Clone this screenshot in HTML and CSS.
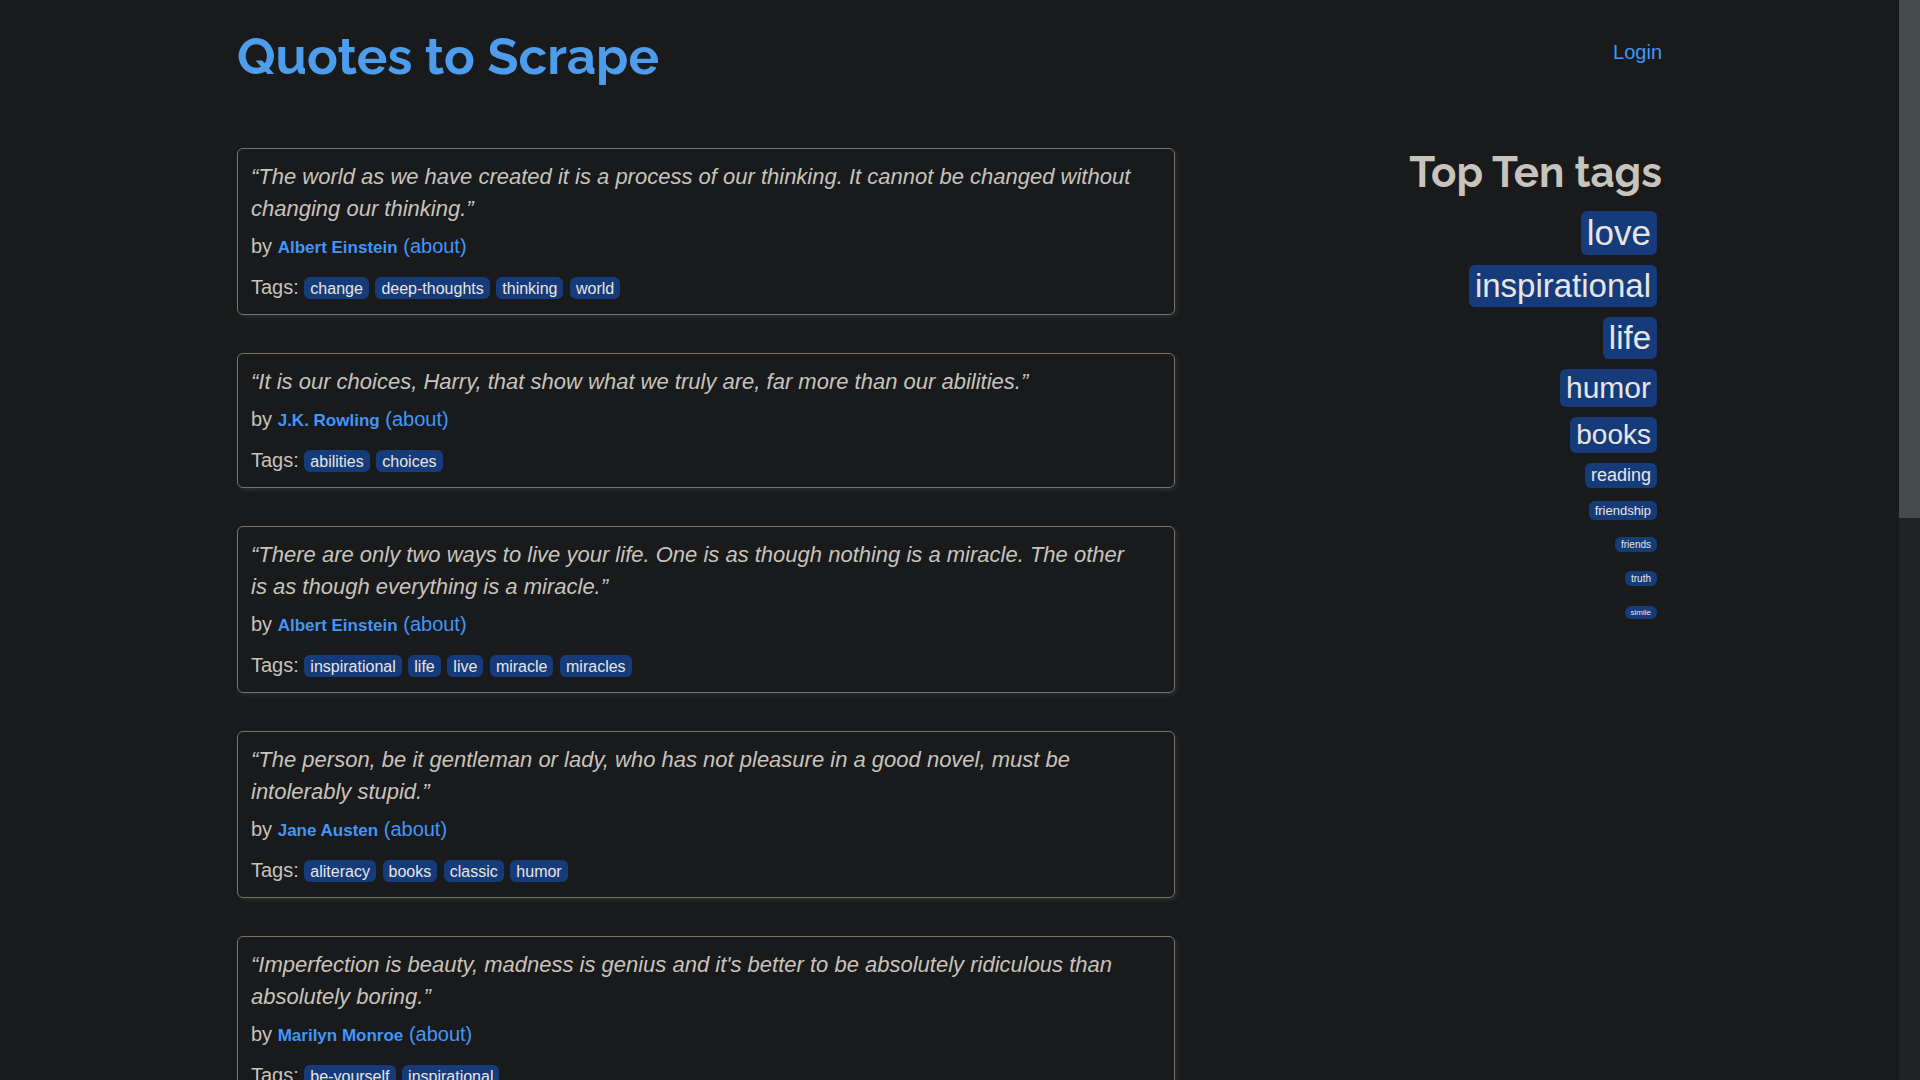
FILE: index.html
```html
<!DOCTYPE html>
<html lang="en">
<head>
<meta charset="utf-8">
<title>Quotes to Scrape</title>
<link rel="stylesheet" href="styles.css">
</head>
<body>
<div class="page">
<div class="container">
<header class="header">
<h1 class="site-title"><a href="#">Quotes to Scrape</a></h1>
<a class="login" href="#">Login</a>
</header>
<div class="columns">
<main class="quotes">
<article class="quote">
<p class="text">“The world as we have created it is a process of our thinking. It cannot be changed without changing our thinking.”</p>
<p class="byline">by <small class="author">Albert Einstein</small> <a href="#">(about)</a></p>
<p class="tags">Tags: <a class="tag" href="#">change</a> <a class="tag" href="#">deep-thoughts</a> <a class="tag" href="#">thinking</a> <a class="tag" href="#">world</a></p>
</article>
<article class="quote">
<p class="text">“It is our choices, Harry, that show what we truly are, far more than our abilities.”</p>
<p class="byline">by <small class="author">J.K. Rowling</small> <a href="#">(about)</a></p>
<p class="tags">Tags: <a class="tag" href="#">abilities</a> <a class="tag" href="#">choices</a></p>
</article>
<article class="quote">
<p class="text">“There are only two ways to live your life. One is as though nothing is a miracle. The other is as though everything is a miracle.”</p>
<p class="byline">by <small class="author">Albert Einstein</small> <a href="#">(about)</a></p>
<p class="tags">Tags: <a class="tag" href="#">inspirational</a> <a class="tag" href="#">life</a> <a class="tag" href="#">live</a> <a class="tag" href="#">miracle</a> <a class="tag" href="#">miracles</a></p>
</article>
<article class="quote">
<p class="text">“The person, be it gentleman or lady, who has not pleasure in a good novel, must be intolerably stupid.”</p>
<p class="byline">by <small class="author">Jane Austen</small> <a href="#">(about)</a></p>
<p class="tags">Tags: <a class="tag" href="#">aliteracy</a> <a class="tag" href="#">books</a> <a class="tag" href="#">classic</a> <a class="tag" href="#">humor</a></p>
</article>
<article class="quote">
<p class="text">“Imperfection is beauty, madness is genius and it's better to be absolutely ridiculous than absolutely boring.”</p>
<p class="byline">by <small class="author">Marilyn Monroe</small> <a href="#">(about)</a></p>
<p class="tags">Tags: <a class="tag" href="#">be-yourself</a> <a class="tag" href="#">inspirational</a></p>
</article>
</main>
<aside class="top-tags">
<h2>Top Ten tags</h2>
<ul>
<li><a class="tag size-35" href="#">love</a></li>
<li><a class="tag size-33" href="#">inspirational</a></li>
<li><a class="tag size-33" href="#">life</a></li>
<li><a class="tag size-30" href="#">humor</a></li>
<li><a class="tag size-28" href="#">books</a></li>
<li><a class="tag size-18" href="#">reading</a></li>
<li><a class="tag size-13" href="#">friendship</a></li>
<li><a class="tag size-10" href="#">friends</a></li>
<li><a class="tag size-10" href="#">truth</a></li>
<li><a class="tag size-8" href="#">simile</a></li>
</ul>
</aside>
</div>
</div>
</div>
<div class="scrollbar"><div class="thumb"></div></div>
</body>
</html>
```
FILE: styles.css
```css
* {
  box-sizing: border-box;
}

body {
  margin: 0;
  display: flex;
  height: 100vh;
  background: #181a1b;
  color: #c8c3bc;
  font: 20px/28px "Liberation Sans", Arial, sans-serif;
}

h1,
h2,
p,
ul {
  margin: 0;
  padding: 0;
}

a {
  color: #4296f8;
  text-decoration: none;
}

.page {
  flex: 1;
  overflow-y: auto;
  scrollbar-width: none;
}

.container {
  max-width: 1463px;
  margin: 0 auto;
  padding: 0 19px 38px;
}

.header {
  display: flex;
  justify-content: space-between;
  align-items: flex-start;
  padding-top: 25px;
  height: 148px;
}

.site-title {
  font: bold 51px/62px Raleway, Lato, sans-serif;
}

.site-title a {
  color: #4e9ded;
}

.login {
  margin-top: 13px;
}

.columns {
  display: flex;
  justify-content: space-between;
  align-items: flex-start;
}

.quotes {
  flex: 0 1 938px;
  display: grid;
  gap: 38px;
}

.quote {
  padding: 12px 13px 13px;
  border: 1px solid #7b7166;
  border-radius: 6px;
  box-shadow: 2px 2px 4px #2b2f31;
}

.text {
  padding-right: 16px;
  font-size: 22px;
  line-height: 32px;
  font-style: italic;
}

.byline {
  margin-top: 7px;
}

.author {
  font-size: 17px;
  font-weight: bold;
  color: #4296f8;
}

.tags {
  margin-top: 13px;
}

.tag {
  margin-right: 1px;
  padding: 2px 6px;
  border-radius: 6px;
  background: #163b7a;
  color: #e8e6e3;
  font-size: 16px;
  line-height: normal;
}

.byline,
.tags {
  height: 28px;
}

.tags .tag {
  padding: 3px 6px 2px;
}

.top-tags {
  text-align: right;
}

.top-tags h2 {
  font: bold 42px/50px Raleway, Lato, sans-serif;
  margin-bottom: 13px;
}

.top-tags ul {
  display: grid;
  gap: 10px;
  padding-right: 4px;
  list-style: none;
}

.top-tags li {
  display: flex;
  justify-content: flex-end;
  align-items: center;
  min-height: 24px;
}

.size-35 {
  font-size: 35px;
}

.size-33 {
  font-size: 33px;
}

.size-30 {
  font-size: 30px;
}

.size-28 {
  font-size: 28px;
}

.size-18 {
  font-size: 18px;
}

.size-13 {
  font-size: 13px;
}

.size-10 {
  font-size: 10px;
}

.size-8 {
  font-size: 8px;
}

.scrollbar {
  flex: 0 0 21px;
  background: #202324;
}

.thumb {
  height: 48%;
  background: #454a4d;
}
```
